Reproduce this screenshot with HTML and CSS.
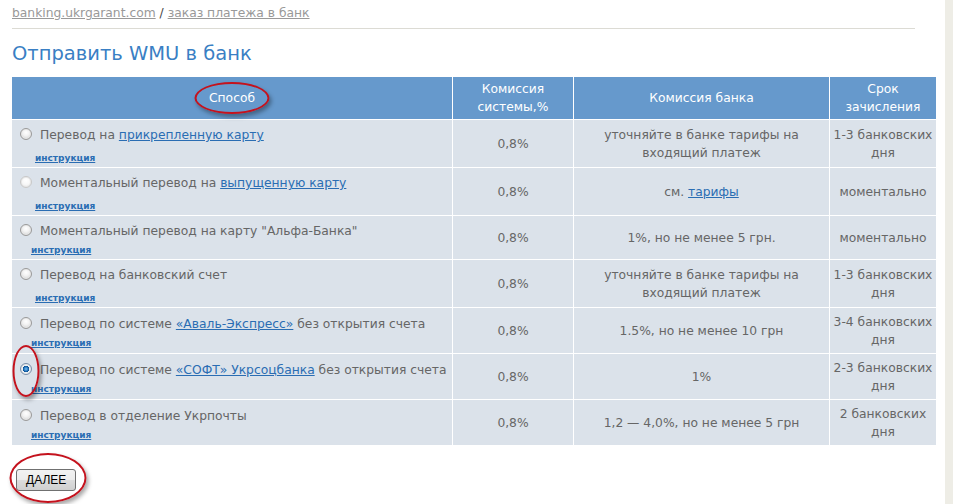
FILE: index.html
```html
<!DOCTYPE html>
<html lang="ru">
<head>
  <meta charset="UTF-8">
  <title>Отправить WMU в банк</title>
  <link rel="stylesheet" href="styles.css">
</head>
<body>

<div class="layout">
  <main class="page">
    <div class="crumbs">
      <a href="#">banking.ukrgarant.com</a> / <a href="#">заказ платежа в банк</a>
    </div>

    <h1>Отправить WMU в банк</h1>

    <form class="order">
      <table class="methods">
        <colgroup>
          <col class="c-way">
          <col class="c-sys">
          <col class="c-bank">
          <col class="c-term">
        </colgroup>
        <thead>
          <tr>
            <th><span class="mark-wrap">Способ<span class="mark mark-head"></span></span></th>
            <th>Комиссия<br>системы,%</th>
            <th>Комиссия банка</th>
            <th>Срок<br>зачисления</th>
          </tr>
        </thead>
        <tbody>
          <tr>
            <td class="way">
              <label><span class="pick"><input type="radio" name="way"></span>Перевод на <a href="#">прикрепленную карту</a></label>
              <a class="instr" href="#">инструкция</a>
            </td>
            <td>0,8%</td>
            <td>уточняйте в банке тарифы на<br>входящий платеж</td>
            <td>1-3 банковских<br>дня</td>
          </tr>
          <tr>
            <td class="way">
              <label><span class="pick"><input type="radio" name="way" class="faded"></span>Моментальный перевод на <a href="#">выпущенную карту</a></label>
              <a class="instr" href="#">инструкция</a>
            </td>
            <td>0,8%</td>
            <td>см. <a href="#">тарифы</a></td>
            <td>моментально</td>
          </tr>
          <tr>
            <td class="way">
              <label><span class="pick"><input type="radio" name="way"></span>Моментальный перевод на карту "Альфа-Банка"</label>
              <a class="instr alt" href="#">инструкция</a>
            </td>
            <td>0,8%</td>
            <td>1%, но не менее 5 грн.</td>
            <td>моментально</td>
          </tr>
          <tr>
            <td class="way">
              <label><span class="pick"><input type="radio" name="way"></span>Перевод на банковский счет</label>
              <a class="instr" href="#">инструкция</a>
            </td>
            <td>0,8%</td>
            <td>уточняйте в банке тарифы на<br>входящий платеж</td>
            <td>1-3 банковских<br>дня</td>
          </tr>
          <tr>
            <td class="way">
              <label><span class="pick"><input type="radio" name="way"></span>Перевод по системе <a href="#">«Аваль-Экспресс»</a> без открытия счета</label>
              <a class="instr alt" href="#">инструкция</a>
            </td>
            <td>0,8%</td>
            <td>1.5%, но не менее 10 грн</td>
            <td>3-4 банковских<br>дня</td>
          </tr>
          <tr>
            <td class="way">
              <label><span class="pick mark-wrap"><input type="radio" name="way" checked><span class="mark mark-radio"></span></span>Перевод по системе <a href="#">«СОФТ» Укрсоцбанка</a> без открытия счета</label>
              <a class="instr alt" href="#">инструкция</a>
            </td>
            <td>0,8%</td>
            <td>1%</td>
            <td>2-3 банковских<br>дня</td>
          </tr>
          <tr>
            <td class="way">
              <label><span class="pick"><input type="radio" name="way"></span>Перевод в отделение Укрпочты</label>
              <a class="instr alt" href="#">инструкция</a>
            </td>
            <td>0,8%</td>
            <td>1,2 — 4,0%, но не менее 5 грн</td>
            <td>2 банковских<br>дня</td>
          </tr>
        </tbody>
      </table>

      <div class="actions">
        <span class="mark-wrap btn-wrap"><button type="button">ДАЛЕЕ</button><span class="mark mark-btn"></span></span>
      </div>
    </form>
  </main>
  <aside class="side"></aside>
</div>

</body>
</html>
```

FILE: styles.css
```css
:root {
  --head: #6699cc;
  --cell: #dbe2ea;
  --text: #666;
  --link: #2a6db3;
  --mark: #c4121d;
}

html, body {
  margin: 0;
  height: 100%;
}

body {
  font-family: "DejaVu Sans", Verdana, sans-serif;
  font-size: 12.3px;
  color: var(--text);
  background: #fff;
}

.layout {
  display: flex;
  min-height: 100%;
}

.page {
  flex: 1;
  padding: 0 0 0 12px;
}

.side {
  width: 8px;
  background: #eeede6;
}

a {
  color: var(--link);
}

.crumbs {
  padding: 6px 0 7px;
  margin-right: 30px;
  border-bottom: 1px solid #dcdbd4;
  color: #444;
  line-height: 15px;
}

.crumbs a {
  color: #999;
}

h1 {
  margin: 12px 0 9px;
  font-size: 19.5px;
  font-weight: normal;
  color: #3a7fc4;
  line-height: 26px;
}

.methods {
  width: 925px;
  margin-left: -1px;
  table-layout: fixed;
  border-collapse: collapse;
}

.c-way  { width: 441px; }
.c-sys  { width: 121px; }
.c-bank { width: 256px; }
.c-term { width: 107px; }

.methods th,
.methods td {
  border: 1px solid #fff;
  text-align: center;
  line-height: 18px;
}

.methods th {
  background: var(--head);
  color: #fff;
  font-weight: normal;
  padding: 3px 3px;
}

.methods td {
  background: var(--cell);
  padding: 5px 3px 4px;
}

.methods td.way {
  text-align: left;
  padding: 6px 3px 3px 8px;
}

.way label {
  display: block;
}

.instr {
  display: block;
  margin: 8px 0 0 15px;
  font-size: 9px;
  font-weight: bold;
  line-height: 12px;
  width: max-content;
}

.instr.alt {
  margin: 4px 0 0 11px;
}

.pick {
  display: inline-block;
  width: 12px;
  height: 12px;
  margin-right: 8px;
  vertical-align: -1px;
}

input[type="radio"] {
  appearance: none;
  display: block;
  box-sizing: border-box;
  width: 12px;
  height: 12px;
  margin: 0;
  border-radius: 50%;
  border: 1px solid #9a9a9a;
  background: radial-gradient(circle at 50% 35%, #fff 0, #f2f2f2 40%, #c9c9c9 100%);
  box-shadow: inset 0 0 0 1px #e8e8e8;
}

input[type="radio"].faded {
  border-color: #c8c8c8;
  background: radial-gradient(circle at 50% 35%, #fff 0, #f7f7f7 50%, #e0e0e0 100%);
}

input[type="radio"]:checked {
  border-color: #7a8fa8;
  background: radial-gradient(circle, #7cc0f0 0, #2273bd 30%, #0b4f8f 42%, #eef2f6 47%, #cfd6de 100%);
}

.actions {
  padding: 23px 0 20px 4px;
}

button {
  display: block;
  font-family: "Liberation Sans", Arial, sans-serif;
  font-size: 12px;
  color: #000;
  height: 22px;
  padding: 0 9px;
  border: 1px solid #707070;
  border-radius: 3px;
  background: linear-gradient(#f2f2f2 0, #ebebeb 50%, #dddddd 51%, #cfcfcf 100%);
}

/* red annotation ellipses drawn over the screenshot */
.mark-wrap {
  position: relative;
}

.btn-wrap {
  display: inline-block;
}

.mark {
  position: absolute;
  left: 50%;
  top: 50%;
  transform: translate(-50%, -50%);
  border: 2px solid var(--mark);
  border-radius: 50%;
  box-shadow: 2px 3px 4px rgba(0, 0, 0, .35);
  pointer-events: none;
}

.mark-head {
  width: 71px;
  height: 28px;
}

.mark-radio {
  width: 23px;
  height: 48px;
  margin-top: 2px;
}

.mark-btn {
  width: 73px;
  height: 46px;
  margin: -2px 0 0 2px;
}
```
